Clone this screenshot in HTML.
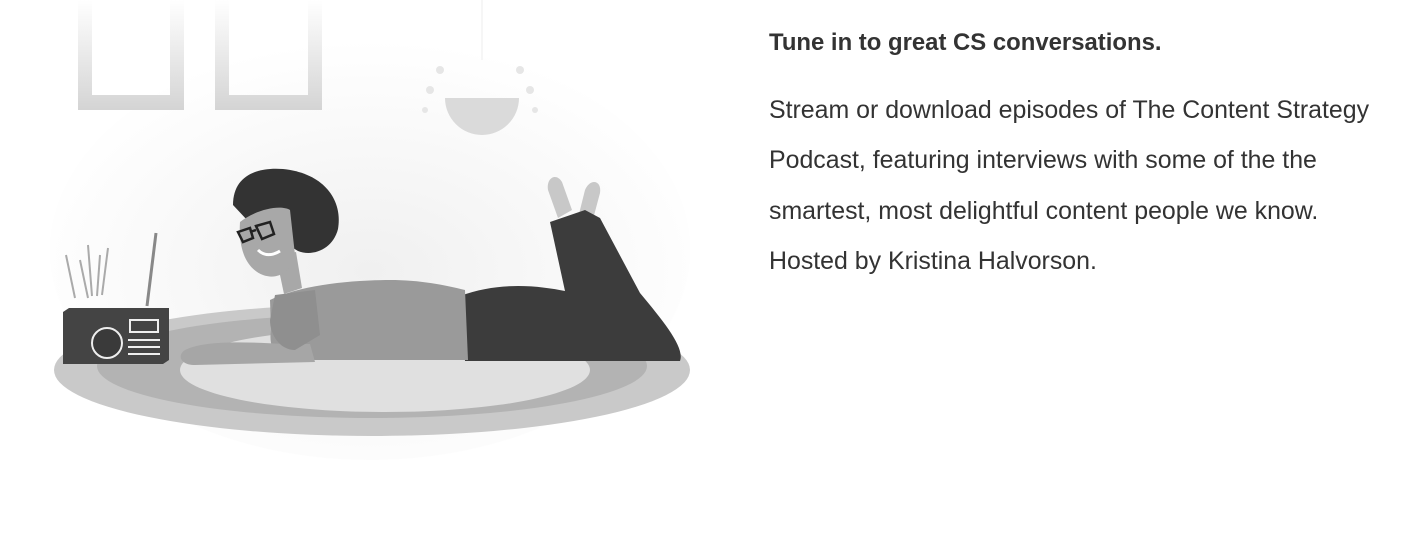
<!DOCTYPE html>
<html><head><meta charset="utf-8"><style>
body{margin:0;width:1407px;height:549px;background:#fff;overflow:hidden;position:relative;font-family:"Liberation Sans",Arial,sans-serif;color:#333}
svg{position:absolute;left:0;top:0}
h2{position:absolute;left:769px;top:29px;margin:0;font-size:23.9px;font-weight:bold;color:#333}
p{position:absolute;left:769px;top:85px;margin:0;font-size:24.9px;line-height:50.4px;width:640px;color:#333;white-space:nowrap}
</style></head><body>
<svg width="720" height="460" viewBox="0 0 720 460">
<defs>
<radialGradient id="bg" cx="0.5" cy="0.55" r="0.55"><stop offset="0" stop-color="#f0f0f0"/><stop offset="1" stop-color="#fff"/></radialGradient>
<linearGradient id="fr" x1="0" y1="0" x2="0" y2="1"><stop offset="0" stop-color="#fff"/><stop offset="1" stop-color="#d4d4d4"/></linearGradient>
</defs>
<ellipse cx="370" cy="250" rx="320" ry="210" fill="url(#bg)"/>
<path d="M78 0h106v110h-106z M92 0v95h78v-95z" fill="url(#fr)" fill-rule="evenodd"/>
<path d="M215 0h107v110h-107z M229 0v95h79v-95z" fill="url(#fr)" fill-rule="evenodd"/>
<line x1="482" y1="0" x2="482" y2="60" stroke="#eee"/>
<path d="M445 98a37 37 0 0 0 74 0z" fill="#dadada"/>
<g fill="#e6e6e6"><circle cx="430" cy="90" r="4"/><circle cx="440" cy="70" r="4"/><circle cx="530" cy="90" r="4"/><circle cx="520" cy="70" r="4"/><circle cx="425" cy="110" r="3"/><circle cx="535" cy="110" r="3"/></g>
<ellipse cx="372" cy="370" rx="318" ry="66" fill="#c9c9c9"/>
<ellipse cx="372" cy="366" rx="275" ry="52" fill="#b3b3b3"/>
<ellipse cx="385" cy="370" rx="205" ry="42" fill="#e0e0e0"/>
<g stroke="#aaa" stroke-width="2"><line x1="66" y1="255" x2="75" y2="298"/><line x1="80" y1="260" x2="88" y2="298"/><line x1="88" y1="245" x2="92" y2="296"/><line x1="100" y1="255" x2="97" y2="296"/><line x1="108" y1="248" x2="102" y2="295"/></g>
<line x1="147" y1="306" x2="156" y2="233" stroke="#888" stroke-width="3"/>
<path d="M63 312l6-4h100v52l-6 4h-100z" fill="#444"/>
<circle cx="107" cy="343" r="15" fill="#3a3a3a" stroke="#eee" stroke-width="2"/>
<rect x="130" y="320" width="28" height="12" fill="none" stroke="#eee" stroke-width="2"/>
<g stroke="#eee" stroke-width="2"><line x1="128" y1="340" x2="160" y2="340"/><line x1="128" y1="347" x2="160" y2="347"/><line x1="128" y1="354" x2="160" y2="354"/></g>
<path d="M548 190c-2-12 8-18 14-8l10 28-14 8z" fill="#c8c8c8"/>
<path d="M585 190c5-12 17-10 15 3l-8 30-14-5z" fill="#c8c8c8"/>
<path d="M550 222l35-12 15 8 40 75c25 30 45 55 40 68l-215 0-5-65c40-15 80-10 105-5z" fill="#3c3c3c"/>
<path d="M270 300c30-15 80-20 120-20 30 0 55 5 75 10l3 70-175 0c-15 0-25-10-22-30z" fill="#9a9a9a"/>
<path d="M185 350c20-10 60-8 100-6l25 0 5 18-120 3c-15 0-18-10-10-15z" fill="#a6a6a6"/>
<path d="M275 295l40-5 5 45-25 15c-15 0-25-15-25-30z" fill="#8f8f8f"/>
<path d="M276 256l20-4 6 36-18 6z" fill="#a8a8a8"/>
<path d="M233 205c0-30 25-38 50-36 40 4 60 30 55 60-5 20-25 28-40 22l-50-30z" fill="#333"/>
<path d="M240 222c15-12 40-18 50-12l5 45c-5 18-18 25-32 20-16-6-25-25-23-53z" fill="#a8a8a8"/>
<path d="M258 250c6 6 14 6 22 1" stroke="#fff" stroke-width="3" fill="none"/>
<g fill="none" stroke="#222" stroke-width="2.5"><path d="M238 232l12-4 3 10-10 4z"/><path d="M256 226l14-4 4 12-12 5z"/><line x1="250" y1="232" x2="256" y2="230"/></g>
</svg>
<h2>Tune in to great CS conversations.</h2>
<p>Stream or download episodes of The Content Strategy<br>Podcast, featuring interviews with some of the the<br>smartest, most delightful content people we know.<br>Hosted by Kristina Halvorson.</p>
</body></html>
